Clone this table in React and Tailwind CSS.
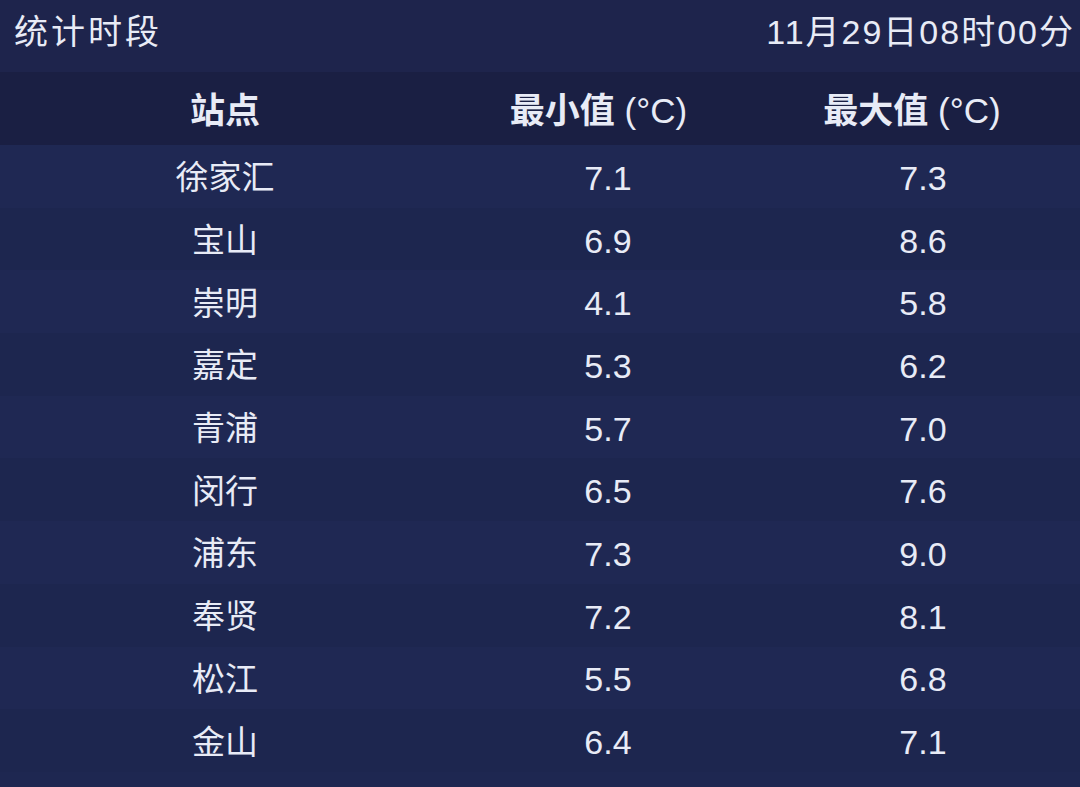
const ROWS = [
    ['徐家汇', '7.1', '7.3'],
    ['宝山', '6.9', '8.6'],
    ['崇明', '4.1', '5.8'],
    ['嘉定', '5.3', '6.2'],
    ['青浦', '5.7', '7.0'],
    ['闵行', '6.5', '7.6'],
    ['浦东', '7.3', '9.0'],
    ['奉贤', '7.2', '8.1'],
    ['松江', '5.5', '6.8'],
    ['金山', '6.4', '7.1'],
];

function Unit() {
    return <span className="font-normal"> (°C)</span>;
}

export default function App() {
    return (
        <div
            className="w-[1080px] h-[787px] overflow-hidden bg-[#1e2751] text-[#e8ebf6] text-[33px] leading-none"
            style={{ fontFamily: '"Liberation Sans", "Noto Sans CJK SC", sans-serif' }}
        >
            <div className="h-[72px] flex items-center justify-between pl-[14px] pr-[5px] pb-[8px] bg-[#1e244c] text-[34px]">
                <span className="tracking-[3px]">统计时段</span>
                <span className="tracking-[2px]">11月29日08时00分</span>
            </div>

            <div className="h-[73px] pt-[4px] grid grid-cols-[450px_316px_314px] items-center bg-[#1a1f43] font-bold text-[35px]">
                <div className="text-center">站点</div>
                <div className="text-center pr-[19px]">最小值<Unit /></div>
                <div className="text-center pr-[22px]">最大值<Unit /></div>
            </div>

            {ROWS.map(([name, min, max], i) => (
                <div
                    key={name}
                    className={`h-[62.7px] pt-[3px] grid grid-cols-[450px_316px_314px] items-center ${i % 2 === 0 ? 'bg-[#1f2853]' : 'bg-[#1d264f]'}`}
                >
                    <div className="text-center">{name}</div>
                    <div className="text-center text-[34px]">{min}</div>
                    <div className="text-center text-[34px]">{max}</div>
                </div>
            ))}
        </div>
    );
}
